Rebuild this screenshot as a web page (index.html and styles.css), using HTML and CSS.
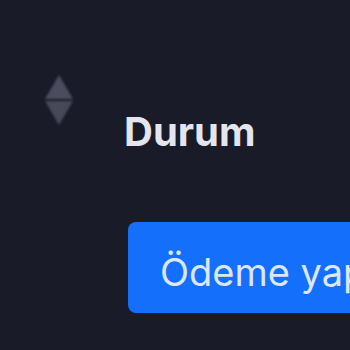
FILE: index.html
```html
<!DOCTYPE html>
<html lang="tr">
<head>
<meta charset="utf-8">
<link rel="stylesheet" href="styles.css">
</head>
<body>
<div class="row">
  <div class="sort">
    <svg width="28" height="50" viewBox="0 0 28 50">
      <polygon points="14,0 28,24 0,24" fill="#4b4d5e"/>
      <polygon points="0,26 28,26 14,50" fill="#474959"/>
    </svg>
  </div>
  <div class="col">
    <div class="title">Durum</div>
    <div class="btn">Ödeme yapıldı</div>
  </div>
</div>
</body>
</html>
```
FILE: styles.css
```css
html, body {
  margin: 0;
  padding: 0;
  width: 350px;
  height: 350px;
  overflow: hidden;
  background: #1a1b28;
}
.row {
  display: flex;
  padding: 75px 0 0 45px;
  gap: 51px;
}
.sort {
  width: 28px;
  height: 50px;
  flex: none;
}
.sort svg {
  display: block;
  filter: blur(0.9px);
}
.col {
  display: flex;
  flex-direction: column;
  align-items: flex-start;
  padding-top: 37px;
  gap: 70px;
}
.title {
  font-family: Inter, "Noto Sans", sans-serif;
  font-weight: 700;
  font-size: 40px;
  line-height: 40px;
  color: #e4e5ee;
  white-space: nowrap;
}
.btn {
  margin-left: 4px;
  background: #1470fb;
  border-radius: 8px;
  padding: 31px 40px 22px 32px;
  font-family: Inter, "Noto Sans", sans-serif;
  font-size: 38px;
  line-height: 38px;
  color: #dbe7ff;
  white-space: nowrap;
}
```
